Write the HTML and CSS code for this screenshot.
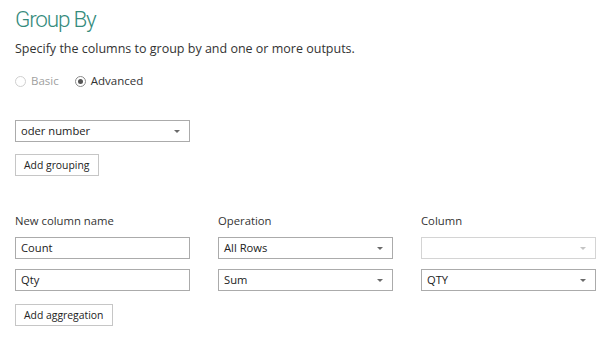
FILE: index.html
```html
<!DOCTYPE html>
<html lang="en">
<head>
    <meta charset="UTF-8">
    <meta name="viewport" content="width=device-width, initial-scale=1.0">
    <title>Group By</title>
    <link rel="stylesheet" href="styles.css">
</head>
<body>
    <div class="dialog">
        <h2 class="title">Group By</h2>
        <p class="subtitle">Specify the columns to group by and one or more outputs.</p>

        <div class="mode">
            <label class="radio disabled"><span class="dot"></span>Basic</label>
            <label class="radio checked"><span class="dot"></span>Advanced</label>
        </div>

        <div class="grouping">
            <div class="select">oder number<span class="arrow"></span></div>
            <button class="btn">Add grouping</button>
        </div>

        <div class="aggregations">
            <div class="label">New column name</div>
            <div class="label">Operation</div>
            <div class="label">Column</div>

            <div class="input">Count</div>
            <div class="select">All Rows<span class="arrow"></span></div>
            <div class="select disabled"><span class="arrow"></span></div>

            <div class="input">Qty</div>
            <div class="select">Sum<span class="arrow"></span></div>
            <div class="select">QTY<span class="arrow"></span></div>
        </div>

        <button class="btn">Add aggregation</button>
    </div>
</body>
</html>
```

FILE: styles.css
```css
body {
    margin: 0;
    font-family: "Segoe UI", "Open Sans", sans-serif;
    color: #333;
    background: #fff;
}
.dialog {
    padding: 4px 15px 0 15px;
}
.title {
    margin: 0;
    font-family: "Segoe UI Light", Roboto, sans-serif;
    font-size: 22.5px;
    font-weight: 300;
    letter-spacing: -1.2px;
    color: #358b7c;
    line-height: 30px;
}
.subtitle {
    margin: 5px 0 0 0;
    font-size: 12.5px;
    line-height: 20px;
    color: #333;
}
.mode {
    display: flex;
    gap: 16px;
    margin-top: 12px;
    font-size: 11.5px;
    line-height: 20px;
}
.radio {
    display: flex;
    align-items: center;
    gap: 5px;
}
.radio .dot {
    width: 9px;
    height: 9px;
    border: 1px solid #bbb;
    border-radius: 50%;
    position: relative;
}
.radio.disabled {
    color: #a0a0a0;
}
.radio.disabled .dot {
    border-color: #d0d0d0;
}
.radio.checked .dot {
    border-color: #8a8a8a;
}
.radio.checked .dot::after {
    content: "";
    position: absolute;
    left: 2px;
    top: 2px;
    width: 5px;
    height: 5px;
    border-radius: 50%;
    background: #555;
}
.grouping {
    margin-top: 29px;
    width: 175px;
}
.select, .input {
    box-sizing: border-box;
    height: 22px;
    border: 1px solid #ababab;
    padding: 0 5px;
    font-size: 11.2px;
    line-height: 20px;
    color: #222;
    position: relative;
    background: #fff;
}
.select.disabled {
    border-color: #d4d4d4;
}
.arrow {
    position: absolute;
    right: 9px;
    top: 9px;
    width: 0;
    height: 0;
    border-left: 3px solid transparent;
    border-right: 3px solid transparent;
    border-top: 3px solid #6a6a6a;
}
.select.disabled .arrow {
    border-top-color: #c4c4c4;
}
.btn {
    display: block;
    box-sizing: border-box;
    height: 22px;
    margin-top: 12px;
    padding: 0 8px;
    border: 1px solid #c6c6c6;
    background: #fff;
    font-family: inherit;
    font-size: 10.4px;
    color: #222;
}
.aggregations {
    display: grid;
    grid-template-columns: 175px 175px 175px;
    column-gap: 28px;
    row-gap: 10px;
    margin-top: 37px;
}
.label {
    font-size: 11.3px;
    line-height: 16px;
    color: #333;
    margin-bottom: -2px;
}
.aggregations + .btn {
    margin-top: 13px;
}
```
